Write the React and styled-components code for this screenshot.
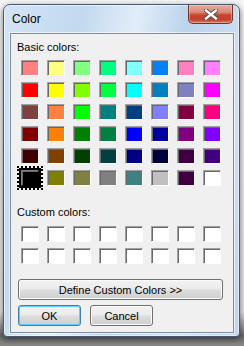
import React from "react";
import styled, { createGlobalStyle } from "styled-components";

const GlobalStyle = createGlobalStyle`
html, body {
  margin: 0;
  padding: 0;
  background: #eeeeee;
}
body {
  font-family: "Liberation Sans", Arial, sans-serif;
}
`

const Screen = styled.div`
width: 244px;
height: 346px;
box-sizing: border-box;
padding: 4px 4px 0 3px;
background: linear-gradient(#f6f6f6 0%, #e8e8e8 90%, #6a6a6a 97%, #8a8a8a 100%);
overflow: hidden;
`

const Window = styled.div`
width: 237px;
height: 333px;
box-sizing: border-box;
display: flex;
flex-direction: column;
border: 1px solid #4a5a6c;
border-radius: 7px 7px 4px 4px;
background: linear-gradient(105deg, #d3e4f5 0%, #c3d9ef 25%, #e2edf9 42%, #bcd3ec 58%, #cfe1f4 80%, #bed5ed 100%);
box-shadow: inset 0 0 0 1px rgba(255, 255, 255, 0.55), 0 2px 6px rgba(0, 0, 0, 0.55);
`

const TitleBar = styled.div`
height: 28px;
display: flex;
align-items: flex-start;
justify-content: space-between;
padding-left: 8px;
`

const Title = styled.span`
padding-top: 7px;
font-size: 12px;
line-height: 14px;
color: #000;
`

const CloseButton = styled.div`
width: 45px;
height: 19px;
box-sizing: border-box;
margin-right: 6px;
display: flex;
align-items: center;
justify-content: center;
border: 1px solid #6e3428;
border-top: none;
border-radius: 0 0 5px 5px;
background: linear-gradient(#e9aa9c 0%, #db8a78 40%, #c8452e 55%, #c0412a 80%, #d97a62 100%);
box-shadow: inset 0 0 0 1px rgba(255, 210, 200, 0.45);
`

const Client = styled.div`
flex: 1;
margin: 0 5px 3px 6px;
display: flex;
flex-direction: column;
border: 1px solid #7f8c9b;
background: #f0f0f0;
padding: 7px 0 0 0;
box-shadow: 0 0 0 1px rgba(255, 255, 255, 0.6);
`

const Label = styled.div`
margin-left: 6px;
margin-top: ${p => p.$top || 0}px;
font-size: 11px;
line-height: 13px;
color: #000;
`

const SwatchGrid = styled.div`
margin-left: 10px;
margin-top: ${p => p.$top}px;
display: grid;
grid-template-columns: repeat(8, 18px);
grid-auto-rows: 16px;
column-gap: 8px;
row-gap: 6px;
`

const Swatch = styled.div`
position: relative;
box-sizing: border-box;
width: 18px;
height: 16px;
background: ${p => p.$color};
border: 1px solid;
border-color: #a0a0a0 #ffffff #ffffff #a0a0a0;
box-shadow: inset 1px 1px 0 #696969;
${p => p.$selected && `
  border-color: #808080 #000 #000 #808080;
  box-shadow: inset 1px 1px 0 #696969, 0 0 0 2px #000;
  &::after {
    content: "";
    position: absolute;
    left: -5px;
    top: -5px;
    right: -5px;
    bottom: -5px;
    border: 2px dotted #000;
  }
`}
`

const Button = styled.button`
box-sizing: border-box;
width: ${p => p.$width}px;
height: 21px;
padding: 0;
font-family: "Liberation Sans", Arial, sans-serif;
font-size: 11px;
color: #000;
border: 1px solid ${p => (p.$default ? "#3c7fb1" : "#707070")};
border-radius: 3px;
background: linear-gradient(#f2f2f2 0%, #ebebeb 48%, #dddddd 52%, #cfcfcf 100%);
box-shadow: inset 0 0 0 1px ${p => (p.$default ? "#62d0f6" : "#fcfcfc")};
`

const DefineButton = styled(Button)`
margin: 15px 0 0 7px;
`

const ButtonRow = styled.div`
display: flex;
gap: 9px;
margin: 5px 0 0 7px;
`

const basic = [
  "#FF8080", "#FFFF80", "#80FF80", "#00FF80", "#80FFFF", "#0080FF", "#FF80C0", "#FF80FF",
  "#FF0000", "#FFFF00", "#80FF00", "#00FF40", "#00FFFF", "#0080C0", "#8080C0", "#FF00FF",
  "#804040", "#FF8040", "#00FF00", "#008080", "#004080", "#8080FF", "#800040", "#FF0080",
  "#800000", "#FF8000", "#008000", "#008040", "#0000FF", "#0000A0", "#800080", "#8000FF",
  "#400000", "#804000", "#004000", "#004040", "#000080", "#000040", "#400040", "#400080",
  "#000000", "#808000", "#808040", "#808080", "#408080", "#C0C0C0", "#400040", "#FFFFFF",
];

const custom = Array(16).fill("#FFFFFF");

const CloseIcon = () => (
  <svg width="14" height="11" viewBox="0 0 14 11">
    <path d="M2 1.5 L12 9.5 M12 1.5 L2 9.5" stroke="#4a4a4a" strokeWidth="4.2" strokeLinecap="square" />
    <path d="M2 1.5 L12 9.5 M12 1.5 L2 9.5" stroke="#ffffff" strokeWidth="2.4" strokeLinecap="square" />
  </svg>
);

const App = () => {
  return (
    <>
      <GlobalStyle />
      <Screen>
        <Window>
          <TitleBar>
            <Title>Color</Title>
            <CloseButton><CloseIcon /></CloseButton>
          </TitleBar>
          <Client>
            <Label>Basic colors:</Label>
            <SwatchGrid $top={6}>
              {basic.map((c, i) => (
                <Swatch key={i} $color={c} $selected={i === 40} />
              ))}
            </SwatchGrid>
            <Label $top={20}>Custom colors:</Label>
            <SwatchGrid $top={7}>
              {custom.map((c, i) => (
                <Swatch key={i} $color={c} />
              ))}
            </SwatchGrid>
            <DefineButton $width={205}>Define Custom Colors &gt;&gt;</DefineButton>
            <ButtonRow>
              <Button $width={63} $default>OK</Button>
              <Button $width={63}>Cancel</Button>
            </ButtonRow>
          </Client>
        </Window>
      </Screen>
    </>
  );
};

export default App;
